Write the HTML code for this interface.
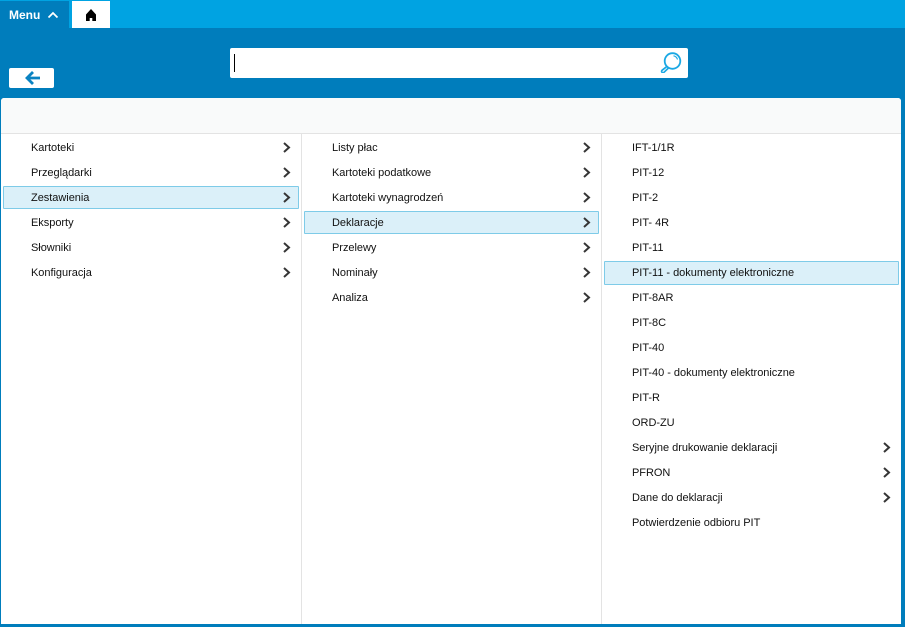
<!DOCTYPE html>
<html lang="pl"><head><meta charset="utf-8"><title>Menu</title>
<style>
html,body{margin:0;padding:0}
body{width:905px;height:627px;position:relative;overflow:hidden;background:#007dbc;font-family:"Liberation Sans",sans-serif;font-size:11px;color:#111}
div{position:absolute;box-sizing:border-box}
svg{position:absolute;display:block}
.top{left:0;top:0;width:905px;height:28px;background:#00a3e2}
.menu{left:0;top:1px;width:69px;height:27px;background:#007dbc;color:#fff;font-weight:bold;font-size:12px;line-height:29px;padding-left:9px}
.home{left:72px;top:1px;width:38px;height:27px;background:#fff}
.back{left:9px;top:68px;width:45px;height:20px;background:#fff;border-radius:2px}
.search{left:230px;top:48px;width:458px;height:30px;background:#fff;border-radius:2px}
.caret{left:4px;top:6px;width:1px;height:18px;background:#000}
.panel{left:1px;top:98px;width:900px;height:526px;background:#fff;border-radius:3px 3px 0 0}
.phead{left:0;top:0;width:900px;height:36px;background:#f9fafa;border-bottom:1px solid #e3e3e3;border-radius:3px 3px 0 0}
.vl{top:36px;bottom:0;width:1px;background:#e3e3e3}
.row{height:25px;line-height:25px;white-space:nowrap;letter-spacing:-.03px;margin-top:1px}
.sel{background:#dbf0f9;border:1px solid #7ecbe8;border-radius:1px}
</style></head><body>
<div class="top"></div>
<div class="menu">Menu</div>
<svg style="left:47px;top:11px" width="12" height="8" viewBox="0 0 12 8"><path d="M1.500 6.500L6 2l4.500 4.500" fill="none" stroke="#fff" stroke-width="1.700"/></svg>
<div class="home"></div>
<svg style="left:85px;top:9px" width="12" height="12" viewBox="0 0 12 12"><path d="M6 0L11 5.500V12H7.300V9H4.700V12H1V5.500Z" fill="#000"/></svg>
<div class="back"></div>
<svg style="left:24px;top:70px" width="17" height="16" viewBox="0 0 17 16"><path d="M9 2L3 8l6 6M3.500 8H16" fill="none" stroke="#0a83c2" stroke-width="2.800"/></svg>
<div class="search"><div class="caret"></div></div>
<svg style="left:660px;top:52px" width="22" height="21" viewBox="0 0 22 21"><circle cx="12.500" cy="9" r="7.800" fill="none" stroke="#1aa8e4" stroke-width="1.800"/><path d="M13.500 3.800A5.200 5.200 0 0 1 17.500 7.500" fill="none" stroke="#1aa8e4" stroke-width="1.100"/><path d="M7.500 14L2 18.300a1.300 1.300 0 0 0 2 2L9 15.500" fill="none" stroke="#1aa8e4" stroke-width="1.700"/></svg>
<div class="panel">
<div class="phead"></div>
<div class="vl" style="left:300px"></div>
<div class="vl" style="left:600px"></div>
</div>

<div class="sel" style="left:3px;top:186px;width:296px;height:23px"></div>
<div class="sel" style="left:304px;top:211px;width:295px;height:23px"></div>
<div class="sel" style="left:604px;top:261px;width:295px;height:24px"></div>

<div class="row" style="left:31px;top:135px">Kartoteki</div>
<div class="row" style="left:31px;top:160px">Przeglądarki</div>
<div class="row" style="left:31px;top:185px">Zestawienia</div>
<div class="row" style="left:31px;top:210px">Eksporty</div>
<div class="row" style="left:31px;top:235px">Słowniki</div>
<div class="row" style="left:31px;top:260px">Konfiguracja</div>

<div class="row" style="left:332px;top:135px">Listy płac</div>
<div class="row" style="left:332px;top:160px">Kartoteki podatkowe</div>
<div class="row" style="left:332px;top:185px">Kartoteki wynagrodzeń</div>
<div class="row" style="left:332px;top:210px">Deklaracje</div>
<div class="row" style="left:332px;top:235px">Przelewy</div>
<div class="row" style="left:332px;top:260px">Nominały</div>
<div class="row" style="left:332px;top:285px">Analiza</div>

<div class="row" style="left:632px;top:135px">IFT-1/1R</div>
<div class="row" style="left:632px;top:160px">PIT-12</div>
<div class="row" style="left:632px;top:185px">PIT-2</div>
<div class="row" style="left:632px;top:210px">PIT- 4R</div>
<div class="row" style="left:632px;top:235px">PIT-11</div>
<div class="row" style="left:632px;top:260px">PIT-11 - dokumenty elektroniczne</div>
<div class="row" style="left:632px;top:285px">PIT-8AR</div>
<div class="row" style="left:632px;top:310px">PIT-8C</div>
<div class="row" style="left:632px;top:335px">PIT-40</div>
<div class="row" style="left:632px;top:360px">PIT-40 - dokumenty elektroniczne</div>
<div class="row" style="left:632px;top:385px">PIT-R</div>
<div class="row" style="left:632px;top:410px">ORD-ZU</div>
<div class="row" style="left:632px;top:435px">Seryjne drukowanie deklaracji</div>
<div class="row" style="left:632px;top:460px">PFRON</div>
<div class="row" style="left:632px;top:485px">Dane do deklaracji</div>
<div class="row" style="left:632px;top:510px">Potwierdzenie odbioru PIT</div>

<svg style="left:0;top:0" width="905" height="627" viewBox="0 0 905 627">
<defs><path id="c" d="M0 0L5 4.500L0 9" fill="none" stroke="#363636" stroke-width="2"/></defs>
<use href="#c" x="284" y="143"/><use href="#c" x="284" y="168"/><use href="#c" x="284" y="193"/><use href="#c" x="284" y="218"/><use href="#c" x="284" y="243"/><use href="#c" x="284" y="268"/>
<use href="#c" x="584" y="143"/><use href="#c" x="584" y="168"/><use href="#c" x="584" y="193"/><use href="#c" x="584" y="218"/><use href="#c" x="584" y="243"/><use href="#c" x="584" y="268"/><use href="#c" x="584" y="293"/>
<use href="#c" x="884" y="443"/><use href="#c" x="884" y="468"/><use href="#c" x="884" y="493"/>
</svg>
</body></html>
